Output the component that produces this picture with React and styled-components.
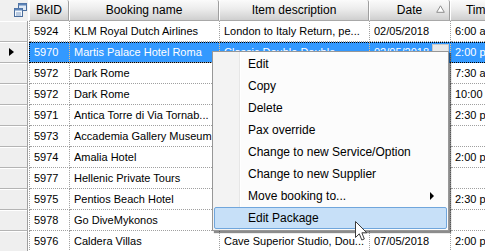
import React from 'react'
import styled, { createGlobalStyle } from 'styled-components'

const GlobalStyle = createGlobalStyle`
  html, body {
    margin: 0;
    padding: 0;
    background: #fff;
  }

  body {
    font-family: "Liberation Sans", Arial, sans-serif;
    font-size: 11px;
    color: #000;
  }
`

const columns = [
  { key: 'id', title: 'BkID', width: 40 },
  { key: 'name', title: 'Booking name', width: 150 },
  { key: 'item', title: 'Item description', width: 150 },
  { key: 'date', title: 'Date', width: 81, sorted: true },
  { key: 'time', title: 'Time', width: 58 }
]

// rows under the context menu keep their hidden columns empty
const rows = [
  { id: '5924', name: 'KLM Royal Dutch Airlines', item: 'London to Italy Return, pe...', date: '02/05/2018', time: '6:00 a.m.' },
  { id: '5970', name: 'Martis Palace Hotel Roma', item: 'Classic Double Double', date: '02/05/2018', time: '2:00 p.m.', selected: true },
  { id: '5972', name: 'Dark Rome', item: '', date: '', time: '7:30 a.m.' },
  { id: '5972', name: 'Dark Rome', item: '', date: '', time: '10:00 a.m.' },
  { id: '5971', name: 'Antica Torre di Via Tornab...', item: '', date: '', time: '2:30 p.m.' },
  { id: '5973', name: 'Accademia Gallery Museum', item: '', date: '', time: '' },
  { id: '5974', name: 'Amalia Hotel', item: '', date: '', time: '2:00 p.m.' },
  { id: '5977', name: 'Hellenic Private Tours', item: '', date: '', time: '' },
  { id: '5975', name: 'Pentios Beach Hotel', item: '', date: '', time: '2:30 p.m.' },
  { id: '5978', name: 'Go DiveMykonos', item: '', date: '', time: '' },
  { id: '5976', name: 'Caldera Villas', item: 'Cave Superior Studio, Dou...', date: '07/05/2018', time: '2:00 p.m.' }
]

const menuItems = [
  { label: 'Edit' },
  { label: 'Copy' },
  { label: 'Delete' },
  { label: 'Pax override' },
  { label: 'Change to new Service/Option' },
  { label: 'Change to new Supplier' },
  { label: 'Move booking to...', submenu: true },
  { label: 'Edit Package', hot: true }
]

const ColumnChooserIcon = () => (
  <svg width='13' height='14' viewBox='0 0 13 14'>
    <rect x='4.5' y='0.5' width='8' height='7' fill='#dfe9f5' stroke='#4a6d9c' />
    <rect x='4.5' y='0.5' width='8' height='2' fill='#5d84b8' />
    <rect x='0.5' y='5.5' width='8' height='8' fill='#f4f8fc' stroke='#4a6d9c' />
    <rect x='0.5' y='5.5' width='8' height='2' fill='#5d84b8' />
    <path d='M2 10h5M2 12h5' stroke='#7f9cc4' />
  </svg>
)

const SortGlyph = () => (
  <svg width='9' height='8' viewBox='0 0 9 8'>
    <path d='M4.5 0.8 L8.3 7.3 L0.7 7.3 Z' fill='#fff' stroke='#8d8d8d' />
  </svg>
)

const Cursor = () => (
  <svg width='13' height='21' viewBox='0 0 13 21'>
    <path
      d='M0.5 0.5 L0.5 16.5 L4.3 12.8 L6.8 19 L9.3 18 L6.9 11.8 L11.8 11.8 Z'
      fill='#fff'
      stroke='#3c3c3c'
      strokeLinejoin='round'
    />
  </svg>
)

class App extends React.Component {
  render () {
    return (
      <Page>
        <GlobalStyle />
        <Grid>
          <HeaderRow>
            <Corner>
              <ColumnChooserIcon />
            </Corner>
            {columns.map((col) => (
              <HeaderCell key={col.key} width={col.width}>
                <span>{col.title}</span>
                {col.sorted ? <SortSlot><SortGlyph /></SortSlot> : null}
              </HeaderCell>
            ))}
          </HeaderRow>

          {rows.map((row, i) => (
            <Row key={i}>
              <Indicator>
                {row.selected ? <Pointer /> : null}
              </Indicator>
              <Cells selected={row.selected}>
                {columns.map((col) => (
                  <Cell key={col.key} width={col.width} selected={row.selected}>
                    <CellText>{row[col.key]}</CellText>
                    {row.selected && col.key === 'date' ? <DropButton /> : null}
                  </Cell>
                ))}
              </Cells>
            </Row>
          ))}
        </Grid>

        <Menu>
          {menuItems.map((entry) => (
            <MenuItem key={entry.label} hot={entry.hot}>
              <span>{entry.label}</span>
              {entry.submenu ? <SubArrow /> : null}
            </MenuItem>
          ))}
        </Menu>

        <CursorSpot>
          <Cursor />
        </CursorSpot>
      </Page>
    )
  }
}

const rowHeight = 21

const Page = styled.div`
  position: relative;

  width: 485px;
  height: 251px;
  overflow: hidden;

  background: #fff;
`

const Grid = styled.div`
  display: flex;
  flex-direction: column;
  width: 640px;
`

const HeaderRow = styled.div`
  display: flex;
  flex: 0 0 auto;
  height: ${rowHeight}px;
`

const Corner = styled.div`
  display: flex;
  align-items: center;
  justify-content: flex-end;
  box-sizing: border-box;
  width: 29px;
  padding: 0 1px 1px 0;

  background: #f0f0f0;
  border-right: 1px solid #fff;
`

const HeaderCell = styled.div`
  position: relative;

  display: flex;
  align-items: center;
  justify-content: center;
  flex: 0 0 ${({ width }) => width}px;
  box-sizing: border-box;
  height: 100%;
  padding-bottom: 1px;

  background: linear-gradient(to bottom, #fbfbfb 0%, #ececec 45%, #dcdcdc 75%, #cfcfcf 100%);
  border-left: 1px solid #fff;
  border-right: 1px solid #9f9f9f;
  border-bottom: 1px solid #a8a8a8;
  border-radius: 2px 2px 0 0;

  font-size: 12px;
  white-space: nowrap;
`

const SortSlot = styled.span`
  position: absolute;
  right: 4px;
  top: 5px;

  display: flex;
`

const Row = styled.div`
  display: flex;
  height: ${rowHeight}px;
`

const Indicator = styled.div`
  display: flex;
  align-items: center;
  justify-content: center;
  flex: 0 0 28px;
  box-sizing: border-box;
  padding-right: 4px;

  background: #efefef;
  border-right: 1px solid #a0a0a0;
  border-bottom: 1px solid #b4b4b4;
  box-shadow: inset 0 1px 0 #fff;
`

const Pointer = styled.span`
  width: 0;
  height: 0;

  border-top: 4px solid transparent;
  border-bottom: 4px solid transparent;
  border-left: 5px solid #000;
`

const Cells = styled.div`
  display: flex;
  box-sizing: border-box;
  margin-left: 1px;

  border-left: 1px dotted #a0a0a0;
  background: ${({ selected }) => selected ? '#3399ff' : '#fff'};
  outline: ${({ selected }) => selected ? '1px dotted #000' : 'none'};
  outline-offset: -1px;
`

const Cell = styled.div`
  display: flex;
  align-items: center;
  flex: 0 0 ${({ width }) => width}px;
  box-sizing: border-box;
  min-width: 0;
  padding-left: 4px;

  border-right: 1px dotted ${({ selected }) => selected ? '#f0c080' : '#a0a0a0'};
  border-bottom: 1px dotted #a0a0a0;
  color: ${({ selected }) => selected ? '#fff' : '#000'};
`

const CellText = styled.span`
  flex: 1 1 auto;
  overflow: hidden;

  white-space: nowrap;
`

const DropButton = styled.span`
  flex: 0 0 15px;
  align-self: stretch;
  margin: 2px 1px 2px 0;

  background: #e9e9e9;
  border: 1px solid #c8c8c8;
`

const Menu = styled.div`
  position: absolute;
  left: 212px;
  top: 51px;

  display: flex;
  flex-direction: column;
  box-sizing: border-box;
  width: 237px;
  padding: 1px;

  background: linear-gradient(to right, #f3f3f3 0, #f3f3f3 26px, #e6e6e6 26px, #e6e6e6 27px, #fff 27px, #fff 28px, #fcfcfc 28px);
  border: 1px solid #979797;
  box-shadow: 2px 2px 1px rgba(0, 0, 0, 0.45);
`

const MenuItem = styled.div`
  display: flex;
  align-items: center;
  box-sizing: border-box;
  height: 22px;
  padding: 0 12px 0 33px;

  background: ${({ hot }) => hot ? '#c7e0f8' : 'transparent'};
  border: 1px solid ${({ hot }) => hot ? '#70a6dc' : 'transparent'};
  border-radius: 2px;

  font-size: 12px;
  white-space: nowrap;

  span {
    flex: 1 1 auto;
  }
`

const SubArrow = styled.i`
  width: 0;
  height: 0;

  border-top: 4px solid transparent;
  border-bottom: 4px solid transparent;
  border-left: 4px solid #000;
`

const CursorSpot = styled.div`
  position: absolute;
  left: 355px;
  top: 221px;

  display: flex;
`

export default App
